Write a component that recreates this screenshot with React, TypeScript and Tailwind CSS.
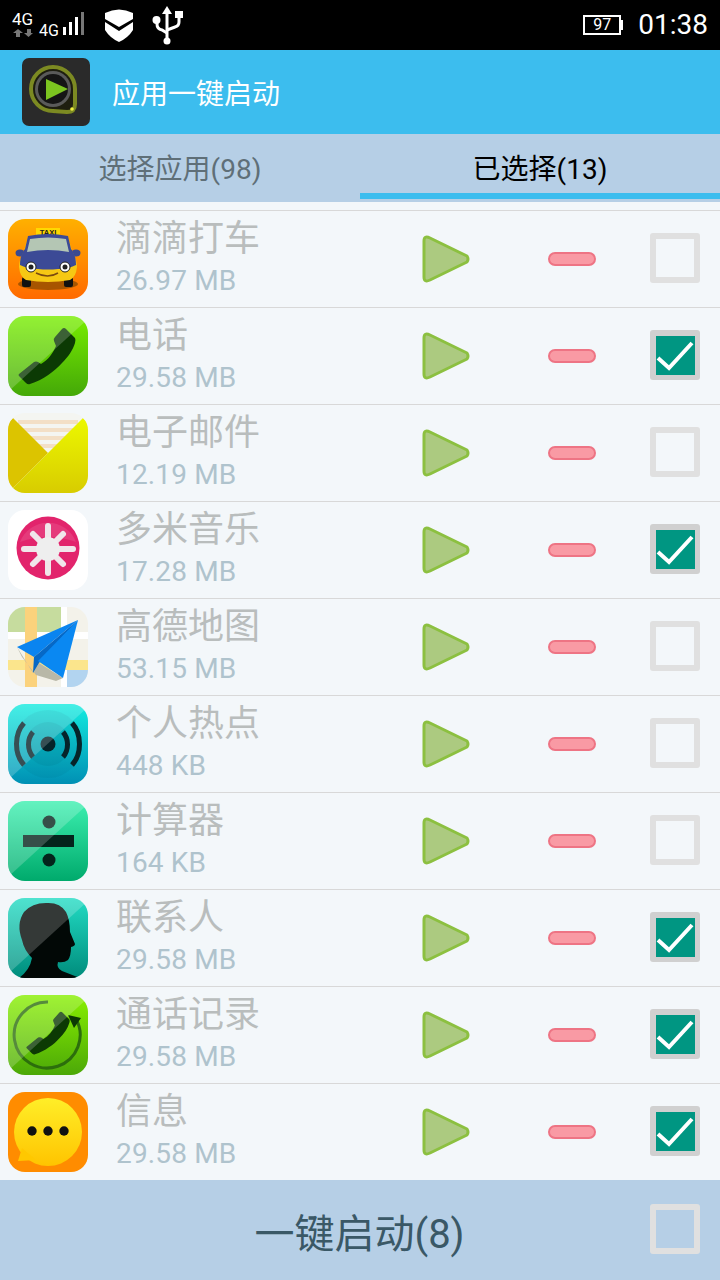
import type { ReactNode } from "react";

const CJK = "font-['Roboto','Noto_Sans_CJK_SC',sans-serif]";

const PHONE =
  "M11 58 L26 46 Q28 45 30 46 L33 48 C40 44 45 37 48 30 L46 25 Q45 23 47 21 L54 13 Q56 11 58 13 L67 22 Q68 24 67 27 C65 34 60 41 54 47 C47 55 35 64 22 68 Q20 69 18 67 L11 60 Q10 59 11 58 Z";

function Tile({ id, gloss = true, children }: { id: string; gloss?: boolean; children: ReactNode }) {
  return (
    <svg viewBox="0 0 80 80" className="w-20 h-20 shrink-0">
      <defs>
        <clipPath id={`clip-${id}`}>
          <rect width="80" height="80" rx="17" />
        </clipPath>
      </defs>
      <g clipPath={`url(#clip-${id})`}>
        {children}
        {gloss && <polygon points="0,0 80,0 80,3 0,76" fill="#fff" opacity="0.2" />}
      </g>
    </svg>
  );
}

function Grad({ id, from, to }: { id: string; from: string; to: string }) {
  return (
    <defs>
      <linearGradient id={id} x1="0" y1="0" x2="0" y2="1">
        <stop offset="0" stopColor={from} />
        <stop offset="1" stopColor={to} />
      </linearGradient>
    </defs>
  );
}

function TaxiIcon() {
  return (
    <Tile id="taxi" gloss={false}>
      <Grad id="g-taxi" from="#ffb000" to="#ff6a00" />
      <rect width="80" height="80" fill="url(#g-taxi)" />
      <ellipse cx="40" cy="65" rx="30" ry="6" fill="#8a4a00" opacity="0.75" />
      <rect x="14" y="58" width="9" height="10" rx="2" fill="#111" />
      <rect x="56" y="58" width="9" height="10" rx="2" fill="#111" />
      <rect x="28" y="9" width="24" height="8" fill="#ffd800" />
      <text x="40" y="15.500" textAnchor="middle" fontSize="7.500" fontWeight="700" fontFamily="Liberation Sans" fill="#222">
        TAXI
      </text>
      <ellipse cx="12" cy="34" rx="4.500" ry="3.500" fill="#3a4a90" />
      <ellipse cx="68" cy="34" rx="4.500" ry="3.500" fill="#3a4a90" />
      <path d="M11 48 C11 42 13 38 16 32 L20 18 Q40 14 60 18 L64 32 C67 38 69 42 69 48 Q68 58 62 61 Q40 65 18 61 Q12 58 11 48 Z" fill="#f6c814" />
      <path d="M12 46 C12 38 14 34 17 30 L20 17 Q40 13 60 17 L63 30 C66 34 68 38 68 46 Q60 50 50 50 Q40 51 30 50 Q20 50 12 46 Z" fill="#3c4a96" />
      <path d="M19 33 L22 20 Q40 17 58 20 L61 33 Q40 29 19 33 Z" fill="#b4c6b4" />
      <circle cx="23" cy="48" r="5" fill="#fff" stroke="#222" strokeWidth="1" />
      <circle cx="23" cy="48" r="2.500" fill="#222" />
      <circle cx="57" cy="48" r="5" fill="#fff" stroke="#222" strokeWidth="1" />
      <circle cx="57" cy="48" r="2.500" fill="#222" />
      <path d="M28 54 Q40 60 50 54" fill="none" stroke="#7a4a10" strokeWidth="1.500" />
    </Tile>
  );
}

function PhoneIcon() {
  return (
    <Tile id="phone">
      <Grad id="g-phone" from="#78ee00" to="#44a808" />
      <rect width="80" height="80" fill="url(#g-phone)" />
      <path d={PHONE} fill="#0c3a04" />
    </Tile>
  );
}

function MailIcon() {
  return (
    <Tile id="mail" gloss={false}>
      <Grad id="g-mail" from="#ecf800" to="#d8cc00" />
      <rect width="80" height="80" fill="#f4f5f1" />
      <g fill="#f3dfc6">
        <rect x="10" y="7" width="60" height="4" />
        <rect x="10" y="15" width="60" height="4" />
        <rect x="10" y="23" width="60" height="4" />
        <rect x="10" y="31" width="60" height="4" />
      </g>
      <polygon points="5,5 40,40 7,73 0,80 0,10" fill="#dcc400" />
      <polygon points="75,5 80,10 80,80 0,80 7,73" fill="url(#g-mail)" />
    </Tile>
  );
}

function MusicIcon() {
  return (
    <Tile id="music" gloss={false}>
      <rect width="80" height="80" fill="#fff" />
      <circle cx="40" cy="38" r="31.500" fill="#e2246c" />
      <path d="M12 32 A30 30 0 0 1 68 32 Q40 22 12 32 Z" fill="#fff" opacity="0.1" />
      <g stroke="#f0e6ea" strokeWidth="6" strokeLinecap="round">
        <path d="M40 39 V16" />
        <path d="M40 39 V63" />
        <path d="M40 39 H16" />
        <path d="M40 39 H65" />
        <path d="M40 39 L25 24" />
        <path d="M40 39 L55 24" />
        <path d="M40 39 L25 54" />
        <path d="M40 39 L55 54" />
      </g>
      <circle cx="40" cy="39" r="12" fill="#eee" />
    </Tile>
  );
}

function MapIcon() {
  return (
    <Tile id="map" gloss={false}>
      <rect width="80" height="80" fill="#f3f2ea" />
      <rect width="53" height="25" fill="#c6dc9e" />
      <rect x="53" width="6" height="80" fill="#fff" />
      <rect y="25" width="80" height="7" fill="#fff" />
      <rect y="53" width="80" height="10" fill="#fbe58c" />
      <rect x="59" y="63" width="21" height="17" fill="#b2d4f0" />
      <rect x="17" width="12" height="80" fill="#fbd27c" />
      <polygon points="9,40 25,66 31,56 55,71 48,74 28,68 14,50" fill="#b8b8a8" />
      <polygon points="70,13 9,40 26,50" fill="#0a84f0" />
      <polygon points="70,13 26,50 25,66 31,56" fill="#0668c6" />
      <polygon points="70,13 30,54 55,71" fill="#0a88f2" />
    </Tile>
  );
}

function HotspotIcon() {
  return (
    <Tile id="hotspot">
      <Grad id="g-hot" from="#14ece0" to="#0090b4" />
      <rect width="80" height="80" fill="url(#g-hot)" />
      <circle cx="40" cy="40" r="34" fill="#006a80" opacity="0.12" />
      <circle cx="40" cy="40" r="22" fill="#006a80" opacity="0.15" />
      <circle cx="40" cy="40" r="7.500" fill="#06242a" />
      <g fill="none" stroke="#06242a" strokeWidth="5">
        <path d="M16 19 C6 30 6 50 16 61" />
        <path d="M64 19 C74 30 74 50 64 61" />
        <path d="M25 28 C19 35 19 46 25 53" />
        <path d="M55 28 C61 35 61 46 55 53" />
      </g>
    </Tile>
  );
}

function CalcIcon() {
  return (
    <Tile id="calc">
      <Grad id="g-calc" from="#3cf0b0" to="#00aa6c" />
      <rect width="80" height="80" fill="url(#g-calc)" />
      <circle cx="41" cy="21" r="6.500" fill="#04241c" />
      <rect x="15" y="34" width="51" height="12" fill="#04241c" />
      <circle cx="41" cy="59" r="6.500" fill="#04241c" />
    </Tile>
  );
}

function ContactIcon() {
  return (
    <Tile id="contact">
      <Grad id="g-contact" from="#22dcc4" to="#008c7c" />
      <rect width="80" height="80" fill="url(#g-contact)" />
      <path
        d="M11 80 Q22 72 24 60 Q16 52 14 42 Q8 26 16 14 Q24 5 38 5 Q52 4 58 14 Q62 22 62 34 L67 46 Q67 48 63 49 Q63 58 60 62 Q56 65 50 64 Q48 70 54 73 L72 80 Z"
        fill="#020806"
      />
    </Tile>
  );
}

function CallLogIcon() {
  return (
    <Tile id="calllog">
      <Grad id="g-log" from="#88f000" to="#4ca808" />
      <rect width="80" height="80" fill="url(#g-log)" />
      <path d="M68 24 A33 33 0 1 1 40 7" fill="none" stroke="#2c6e0c" strokeWidth="3" />
      <polygon points="60,20 73,23 66,33" fill="#0c3a04" />
      <path d={PHONE} fill="#0c3a04" transform="translate(40 38) scale(.76) translate(-39 -40)" />
    </Tile>
  );
}

function SmsIcon() {
  return (
    <Tile id="sms" gloss={false}>
      <Grad id="g-sms" from="#ffee28" to="#ffc400" />
      <rect width="80" height="80" fill="#ff8c00" />
      <circle cx="40" cy="40" r="34" fill="url(#g-sms)" />
      <polygon points="14,56 10,69 28,68" fill="#ffc800" />
      <circle cx="24" cy="39" r="4.700" fill="#111" />
      <circle cx="40" cy="39" r="4.700" fill="#111" />
      <circle cx="56" cy="39" r="4.700" fill="#111" />
    </Tile>
  );
}

function PlayButton() {
  return (
    <svg viewBox="0 0 48 48" className="w-12 h-12 shrink-0">
      <path
        d="M2 6 Q2 0 8 3 L45 21 Q47 24 45 27 L8 45 Q2 48 2 42 Z"
        fill="#acca80"
        stroke="#8cc040"
        strokeWidth="3"
        strokeLinejoin="round"
      />
    </svg>
  );
}

function MinusButton() {
  return <div className="w-12 h-[14px] shrink-0 rounded-full bg-[#f99aa4] border-2 border-[#ee7484]" />;
}

function CheckBox({ checked }: { checked: boolean }) {
  if (!checked) {
    return <div className="w-[50px] h-[50px] shrink-0 rounded-[3px] border-[6px] border-[#e0e0e0]" />;
  }
  return (
    <div className="w-[50px] h-[50px] shrink-0 rounded-[3px] bg-[#d0d0d0] flex items-center justify-center">
      <div className="w-[39px] h-[39px] bg-[#009682]">
        <svg viewBox="0 0 39 39" className="w-full h-full">
          <path d="M2 22 L13 32 L36 7" fill="none" stroke="#fff" strokeWidth="4" />
        </svg>
      </div>
    </div>
  );
}

const apps = [
  { name: "滴滴打车", size: "26.97 MB", icon: <TaxiIcon />, checked: false },
  { name: "电话", size: "29.58 MB", icon: <PhoneIcon />, checked: true },
  { name: "电子邮件", size: "12.19 MB", icon: <MailIcon />, checked: false },
  { name: "多米音乐", size: "17.28 MB", icon: <MusicIcon />, checked: true },
  { name: "高德地图", size: "53.15 MB", icon: <MapIcon />, checked: false },
  { name: "个人热点", size: "448 KB", icon: <HotspotIcon />, checked: false },
  { name: "计算器", size: "164 KB", icon: <CalcIcon />, checked: false },
  { name: "联系人", size: "29.58 MB", icon: <ContactIcon />, checked: true },
  { name: "通话记录", size: "29.58 MB", icon: <CallLogIcon />, checked: true },
  { name: "信息", size: "29.58 MB", icon: <SmsIcon />, checked: true },
];

function StatusBar() {
  return (
    <div className="h-[50px] bg-black flex items-center text-white shrink-0">
      <svg viewBox="0 0 200 50" className="w-[200px] h-[50px] shrink-0">
        <text x="12" y="25" fontSize="17" fontFamily="Roboto" fill="#fff">4G</text>
        <g fill="#777">
          <path d="M13 33 L18 29 L23 33 H20 V37 H16 V33 Z" />
          <path d="M24 33 H27 V29 H31 V33 H33 L28.500 37 Z" />
        </g>
        <text x="39" y="36" fontSize="16" fontFamily="Roboto" fill="#fff">4G</text>
        <g fill="#fff">
          <rect x="63" y="27" width="3" height="8" />
          <rect x="69" y="22" width="3" height="13" />
          <rect x="75" y="17" width="3" height="18" />
        </g>
        <rect x="81" y="12" width="3" height="23" fill="#777" />
        <path d="M105 13 Q119 6 133 13 V19 L119 27 L105 19 Z" fill="#fff" />
        <path d="M105 22 L119 31 L133 22 V30 Q128 38 119 42 Q110 38 105 30 Z" fill="#fff" />
        <g fill="none" stroke="#fff" strokeWidth="3">
          <path d="M167 12 V39" />
          <path d="M157 20 V24 Q157 29 162 30 L167 33" />
          <path d="M179 16 V22 Q179 26 175 27 L167 30" />
        </g>
        <g fill="#fff">
          <polygon points="167,6 162,14 172,14" />
          <circle cx="156.500" cy="20" r="4" />
          <rect x="175" y="11" width="8" height="7" />
          <circle cx="167" cy="41" r="3.500" />
        </g>
      </svg>
      <div className="ml-auto flex items-center">
        <div className="w-[38px] h-[20px] border-2 border-white flex items-center justify-center font-['Roboto',sans-serif] text-[16px] leading-none">
          97
        </div>
        <div className="w-[2px] h-[10px] bg-white" />
        <span className="ml-[15px] mr-[12px] font-['Roboto',sans-serif] text-[28px] leading-none">01:38</span>
      </div>
    </div>
  );
}

function AppLogo() {
  return (
    <svg viewBox="0 0 68 68" className="w-[68px] h-[68px] shrink-0">
      <rect width="68" height="68" rx="7" fill="#2a2a2a" />
      <path d="M31 9 A22 22 0 0 1 53 31 V46 Q53 54 45 54 L31 53 A22 22 0 0 1 31 9 Z" fill="#1e1e10" stroke="#7c8a22" strokeWidth="4" />
      <circle cx="31" cy="31" r="18" fill="#5a5a5a" />
      <circle cx="31" cy="31" r="15" fill="#151515" />
      <polygon points="24,21 46,31 24,42" fill="#7cc420" />
      <circle cx="50" cy="51" r="1.800" fill="#f0f040" />
    </svg>
  );
}

export default function App() {
  return (
    <div className={`w-[720px] h-[1280px] overflow-hidden flex flex-col bg-[#f3f7fa] ${CJK}`}>
      <StatusBar />

      <div className="h-[84px] shrink-0 bg-[#3cbdee] flex items-center pl-[22px]">
        <AppLogo />
        <span className="ml-[22px] pt-[6px] text-[28px] text-white">应用一键启动</span>
      </div>

      <div className="h-[68px] shrink-0 bg-[#b6cfe6] grid grid-cols-2">
        <div className="flex flex-col">
          <div className="flex-1 flex items-center justify-center pt-3 text-[28px] text-[#5f6f78]">选择应用(98)</div>
          <div className="h-[6px] mb-[3px]" />
        </div>
        <div className="flex flex-col">
          <div className="flex-1 flex items-center justify-center pt-3 text-[28px] text-black">已选择(13)</div>
          <div className="h-[6px] mb-[3px] bg-[#3cbdee]" />
        </div>
      </div>

      <div className="flex-1 pt-2">
        {apps.map((app) => (
          <div key={app.name} className="h-[97px] border-t border-[#d8d8d8] flex items-center pl-2 pr-5">
            {app.icon}
            <div className="ml-7 flex-1 flex flex-col">
              <span className="text-[36px] leading-[46px] text-[#b9bdbd]">{app.name}</span>
              <span className="-mt-px mb-px text-[28px] leading-[40px] tracking-[0.15px] text-[#afc3cd]">{app.size}</span>
            </div>
            <PlayButton />
            <div className="ml-[78px] mr-[54px]">
              <MinusButton />
            </div>
            <div className="mb-[2px]">
              <CheckBox checked={app.checked} />
            </div>
          </div>
        ))}
      </div>

      <div className="h-[100px] shrink-0 bg-[#b6cfe6] relative flex items-center justify-center">
        <span className="pt-[10px] text-[40px] text-[#3a5866] -ml-[1px]">一键启动(8)</span>
        <div className="absolute right-5 top-[24px]">
          <CheckBox checked={false} />
        </div>
      </div>
    </div>
  );
}
